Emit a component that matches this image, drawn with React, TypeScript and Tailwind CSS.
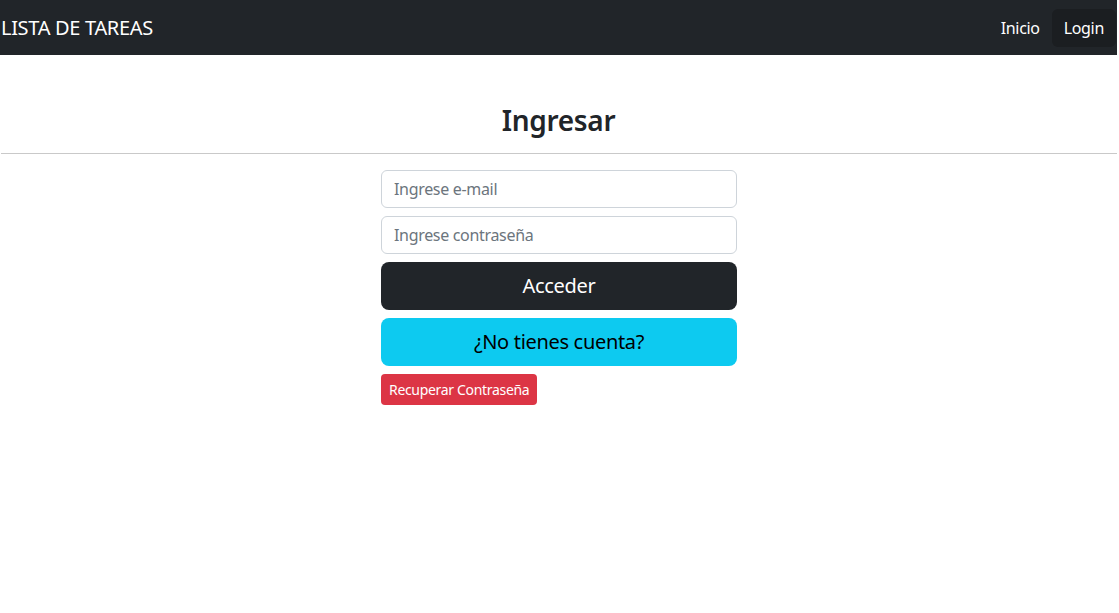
import React from "react";

export default function App() {
  return (
    <div className="w-[1117px] min-h-[613px] bg-white text-[#212529] tracking-[-0.02em]" style={{ fontFamily: '"Noto Sans", sans-serif' }}>
      <nav className="h-[55px] bg-[#212529] flex items-center justify-between pl-[1px] pr-[1px]">
        <span className="text-[20px] text-white leading-none">LISTA DE TAREAS</span>
        <div className="flex items-center h-full">
          <a className="text-[16px] text-white px-[12px] py-[8px] leading-[22px]">Inicio</a>
          <a className="text-[16px] text-white bg-[#1b1e21] rounded-[6px] px-[12px] h-[38px] flex items-center leading-[22px]">Login</a>
        </div>
      </nav>
      <div className="pt-[48px]">
        <h3 className="text-[28px] font-semibold text-center leading-[34px] mb-[16px]">Ingresar</h3>
        <hr className="ml-[1px] border-0 border-t border-[#c9c9c9] mb-[16px]" />
        <div className="w-[356px] ml-[381px] flex flex-col">
          <input
            className="h-[38px] border border-[#ced4da] rounded-[6px] px-[12px] text-[16px] placeholder:text-[#6c757d] outline-none"
            placeholder="Ingrese e-mail"
          />
          <input
            className="h-[38px] mt-[8px] border border-[#ced4da] rounded-[6px] px-[12px] text-[16px] placeholder:text-[#6c757d] outline-none"
            placeholder="Ingrese contraseña"
            type="password"
          />
          <button className="h-[48px] mt-[8px] bg-[#212529] text-white rounded-[8px] text-[20px]">Acceder</button>
          <button className="h-[48px] mt-[8px] bg-[#0dcaf0] text-black rounded-[8px] text-[20px]">¿No tienes cuenta?</button>
          <div className="mt-[8px]">
            <button className="h-[31px] bg-[#dc3545] text-white rounded-[4px] text-[14px] px-[8px]">Recuperar Contraseña</button>
          </div>
        </div>
      </div>
    </div>
  );
}
